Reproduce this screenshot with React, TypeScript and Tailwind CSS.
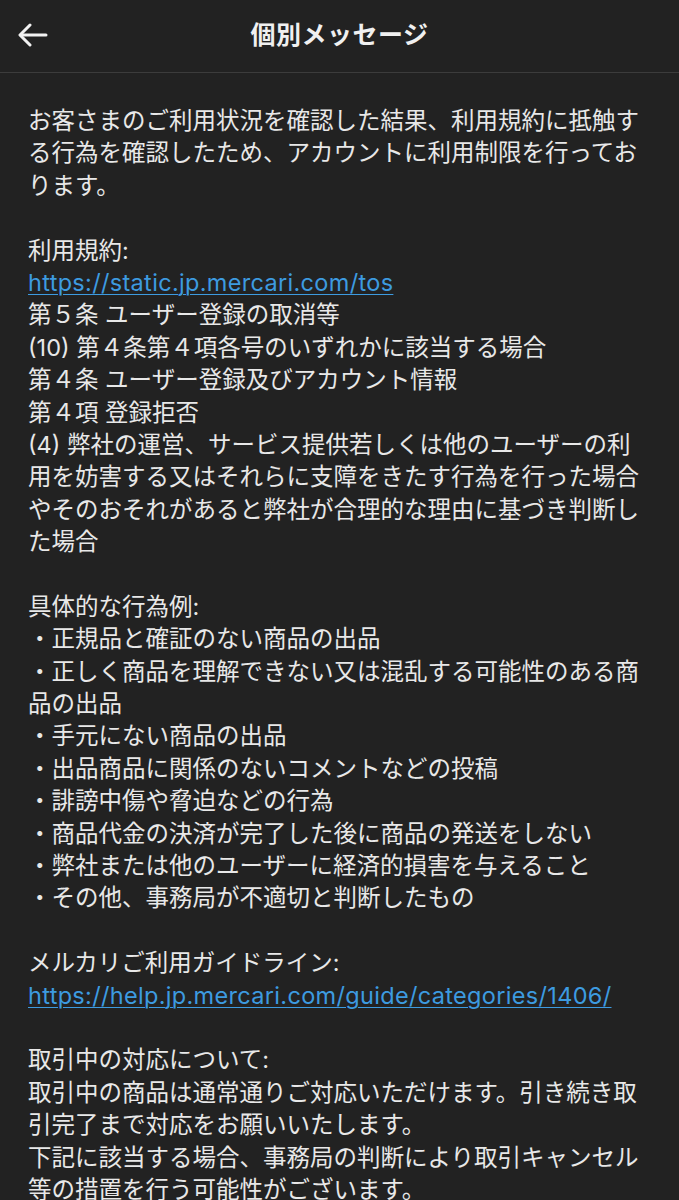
import React from 'react';

type Line = { text: string; link?: boolean };

const lines: Line[] = [
  { text: 'お客さまのご利用状況を確認した結果、利用規約に抵触す' },
  { text: 'る行為を確認したため、アカウントに利用制限を行ってお' },
  { text: 'ります。' },
  { text: '' },
  { text: '利用規約:' },
  { text: 'https://static.jp.mercari.com/tos', link: true },
  { text: '第５条 ユーザー登録の取消等' },
  { text: '(10) 第４条第４項各号のいずれかに該当する場合' },
  { text: '第４条 ユーザー登録及びアカウント情報' },
  { text: '第４項 登録拒否' },
  { text: '(4) 弊社の運営、サービス提供若しくは他のユーザーの利' },
  { text: '用を妨害する又はそれらに支障をきたす行為を行った場合' },
  { text: 'やそのおそれがあると弊社が合理的な理由に基づき判断し' },
  { text: 'た場合' },
  { text: '' },
  { text: '具体的な行為例:' },
  { text: '・正規品と確証のない商品の出品' },
  { text: '・正しく商品を理解できない又は混乱する可能性のある商' },
  { text: '品の出品' },
  { text: '・手元にない商品の出品' },
  { text: '・出品商品に関係のないコメントなどの投稿' },
  { text: '・誹謗中傷や脅迫などの行為' },
  { text: '・商品代金の決済が完了した後に商品の発送をしない' },
  { text: '・弊社または他のユーザーに経済的損害を与えること' },
  { text: '・その他、事務局が不適切と判断したもの' },
  { text: '' },
  { text: 'メルカリご利用ガイドライン:' },
  { text: 'https://help.jp.mercari.com/guide/categories/1406/', link: true },
  { text: '' },
  { text: '取引中の対応について:' },
  { text: '取引中の商品は通常通りご対応いただけます。引き続き取' },
  { text: '引完了まで対応をお願いいたします。' },
  { text: '下記に該当する場合、事務局の判断により取引キャンセル' },
  { text: '等の措置を行う可能性がございます。' },
];

const BackArrow = () => (
  <svg width="30" height="24" viewBox="0 0 30 24" fill="none" stroke="#f2f2f2" strokeWidth="3" strokeLinecap="round" strokeLinejoin="round">
    <path d="M28 12H3" />
    <path d="M12 2L2 12l10 10" />
  </svg>
);

export default function App() {
  return (
    <div
      className="w-[679px] h-[1200px] overflow-hidden bg-[#222222] text-[#e8e8e8]"
      style={{ fontFamily: '"Inter", "Noto Sans CJK JP", sans-serif' }}
    >
      {/* Header */}
      <div className="relative flex items-center justify-center h-[73px] border-b border-[#3c3c3c]">
        <button className="absolute left-[18px] top-[23px]">
          <BackArrow />
        </button>
        <h1 className="text-[25px] font-bold text-[#f0f0f0] tracking-[0.5px]">個別メッセージ</h1>
      </div>

      {/* Message body */}
      <div className="px-[28px] pt-[32px] text-[23.5px] leading-[32.4px]">
        {lines.map((line, i) =>
          line.link ? (
            <div key={i} className="whitespace-nowrap h-[32.4px]">
              <a href="#" className="text-[#3d9be0] underline underline-offset-[3px] decoration-1 tracking-[0.32px]">
                {line.text}
              </a>
            </div>
          ) : (
            <div key={i} className="whitespace-nowrap h-[32.4px]">
              {line.text}
            </div>
          )
        )}
      </div>
    </div>
  );
}
